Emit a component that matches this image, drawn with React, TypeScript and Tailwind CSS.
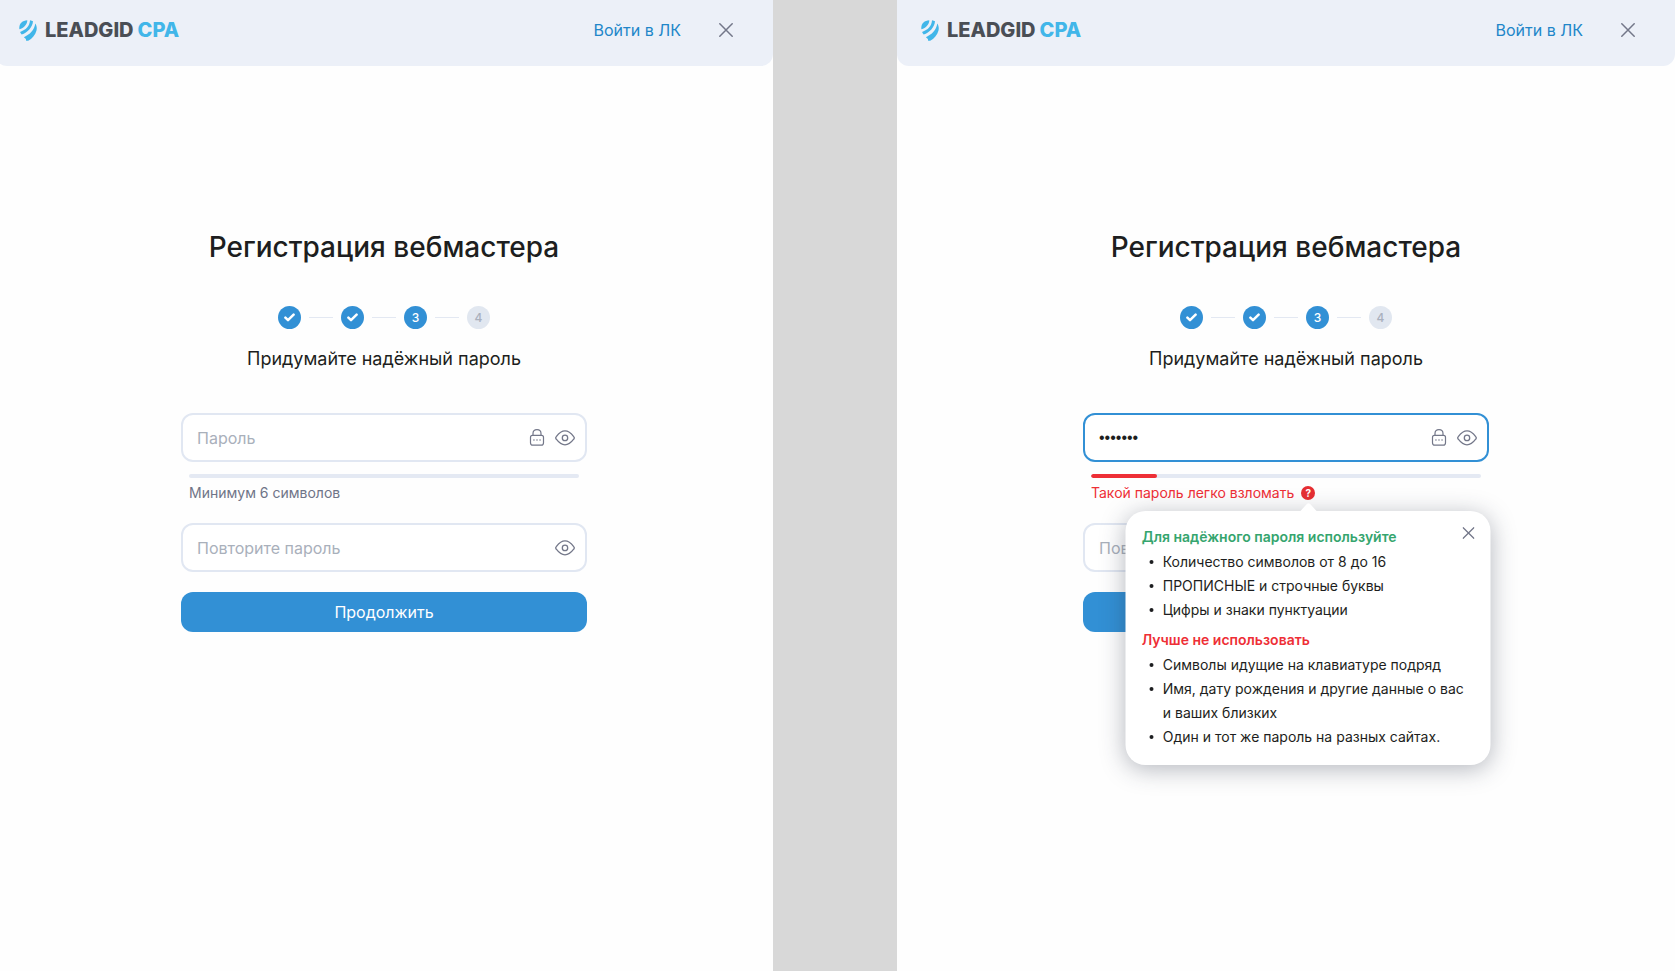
import { useState } from "react";
import clsx from "clsx";

const steps = [
  { number: 1, state: "done" },
  { number: 2, state: "done" },
  { number: 3, state: "current" },
  { number: 4, state: "next" },
];

const goodTips = [
  "Количество символов от 8 до 16",
  "ПРОПИСНЫЕ и строчные буквы",
  "Цифры и знаки пунктуации",
];

const badTips = [
  "Символы идущие на клавиатуре подряд",
  "Имя, дату рождения и другие данные о вас и ваших близких",
  "Один и тот же пароль на разных сайтах.",
];

function LogoMark() {
  return (
    <svg width="18" height="21" viewBox="0 0 18 21" fill="#41b6e9" aria-hidden="true">
      <path d="M0.4 9.2C-0.4 4.2 3 0.4 8.3 0.2C8.3 4.2 4.9 8 0.4 9.2Z" />
      <path d="M11 0.3C12.4 0.5 13.2 0.8 14 1.3C13.6 7 8.5 13 2.7 14.5C1.9 13.6 1.4 12.7 1.1 11.9C6.8 10.2 10.8 5.8 11 0.3Z" />
      <path d="M16.3 3.6C17.6 5.5 18.1 7.8 17.5 10.6C16.3 15 13.2 18.8 9.2 20.8H7.1L6.9 18.9L4.9 17.2C10.8 14.8 15.4 9.8 16.3 3.6Z" />
    </svg>
  );
}

function CloseIcon({ className }: { className?: string }) {
  return (
    <svg className={className} viewBox="0 0 14 14" fill="none" stroke="#737789" strokeWidth="1.5" strokeLinecap="round" aria-hidden="true">
      <path d="M0.8 0.8L13.2 13.2M13.2 0.8L0.8 13.2" />
    </svg>
  );
}

function EyeIcon() {
  return (
    <svg width="20" height="16" viewBox="0 0 20 16" fill="none" stroke="#737789" strokeWidth="1.3" aria-hidden="true">
      <path d="M1.3 9.2C0.6 8.4 0.6 7.4 1.3 6.6C3.3 4 6.2 0.9 10 0.9C13.8 0.9 16.7 4 18.7 6.6C19.4 7.4 19.4 8.4 18.7 9.2C16.7 11.8 13.8 14.9 10 14.9C6.2 14.9 3.3 11.8 1.3 9.2Z" />
      <circle cx="10" cy="7.9" r="2.7" />
    </svg>
  );
}

function LockIcon() {
  return (
    <svg width="16" height="17" viewBox="0 0 16 17" fill="none" stroke="#737789" strokeWidth="1.2" strokeLinecap="round" aria-hidden="true">
      <path d="M4 6.4V4.6C4 2.3 5.7 0.7 8 0.7C10.3 0.7 12 2.3 12 4.6V6.4" />
      <path d="M3.4 6.4H12.6C13.8 6.4 14.5 7.2 14.5 8.4V13.7C14.5 15.3 13.7 16.2 12.3 16.2H3.7C2.3 16.2 1.5 15.3 1.5 13.7V8.4C1.5 7.2 2.2 6.4 3.4 6.4Z" />
      <path d="M4.9 11H5M7.95 11H8.05M11 11H11.1" strokeWidth="1.4" />
    </svg>
  );
}

function Header() {
  return (
    <header className="flex h-[66px] items-center justify-between rounded-b-xl bg-[#ecf0f8] pr-10 pb-[6px] pl-6">
      <a href="#" className="flex items-center gap-2 text-xl leading-none font-extrabold">
        <LogoMark />
        <span className="flex gap-1">
          <span className="text-[#4a4e55]">LEADGID</span>
          <span className="text-[#41b6e9]">CPA</span>
        </span>
      </a>
      <div className="flex items-center gap-[38px]">
        <a href="#" className="text-base text-[#2186c9]">Войти в ЛК</a>
        <button type="button" aria-label="Закрыть">
          <CloseIcon className="size-[14px]" />
        </button>
      </div>
    </header>
  );
}

function Stepper() {
  return (
    <ol className="mt-[41px] flex items-center justify-center gap-2">
      {steps.map((step) => (
        <li key={step.number} className="flex items-center gap-2">
          {step.number > 1 && <span className="h-px w-6 bg-[#e3e8f2]" />}
          <span
            className={clsx(
              "flex size-[23px] items-center justify-center rounded-full text-xs font-medium",
              step.state === "next" ? "bg-[#e1e7f0] text-[#a9b0bd]" : "bg-[#3290d5] text-white"
            )}
          >
            {step.state === "done" ? (
              <svg width="11" height="9" viewBox="0 0 11 9" fill="none" stroke="white" strokeWidth="2.5" strokeLinecap="round" strokeLinejoin="round" aria-hidden="true">
                <path d="M1.4 4.7L4 7.2L9.6 1.7" />
              </svg>
            ) : (
              step.number
            )}
          </span>
        </li>
      ))}
    </ol>
  );
}

function PasswordField({ label, value, onChange, active, lock }: {
  label: string;
  value: string;
  onChange: (value: string) => void;
  active?: boolean;
  lock?: boolean;
}) {
  return (
    <div
      className={clsx(
        "flex h-[49px] items-center gap-[10px] rounded-xl border-2 bg-white pr-[10px] pl-[14px]",
        active ? "border-[#3290d5]" : "border-[#e1e7f2]"
      )}
    >
      <input
        type="password"
        aria-label={label}
        placeholder={label}
        value={value}
        onChange={(e) => onChange(e.target.value)}
        className={clsx(
          "min-w-0 flex-1 text-base text-[#1d1e20] outline-none placeholder:text-[#a9b0bb]",
          value && "font-['Liberation_Sans',sans-serif]"
        )}
      />
      {lock && (
        <button type="button" aria-label="Сгенерировать пароль">
          <LockIcon />
        </button>
      )}
      <button type="button" aria-label="Показать пароль">
        <EyeIcon />
      </button>
    </div>
  );
}

function TipList({ items }: { items: string[] }) {
  return (
    <ul>
      {items.map((item) => (
        <li key={item} className="flex gap-[9px] pl-2">
          <span className="flex h-6 items-center">
            <span className="size-1 rounded-full bg-[#1d1e20]" />
          </span>
          <span>{item}</span>
        </li>
      ))}
    </ul>
  );
}

function PasswordTips() {
  return (
    <div className="absolute top-[25px] left-1/2 z-10 w-[365px] -translate-x-1/2 rounded-[20px] bg-white px-4 pt-[14px] pb-4 text-sm leading-6 text-[#1d1e20] shadow-[0_4px_24px_rgba(40,50,70,0.35)]">
      <svg className="absolute -top-2 left-1/2 -translate-x-1/2" width="18" height="9" viewBox="0 0 18 9" fill="white" aria-hidden="true">
        <path d="M0 9L7.6 0.8Q9 -0.4 10.4 0.8L18 9Z" />
      </svg>
      <button type="button" aria-label="Закрыть подсказку" className="absolute top-4 right-4">
        <CloseIcon className="size-3" />
      </button>
      <h3 className="mb-px font-semibold text-[#35a56e]">Для надёжного пароля используйте</h3>
      <TipList items={goodTips} />
      <h3 className="mt-1.5 mb-px font-semibold text-[#ee2f36]">Лучше не использовать</h3>
      <TipList items={badTips} />
    </div>
  );
}

function Registration({ initialPassword = "" }: { initialPassword?: string }) {
  const [password, setPassword] = useState(initialPassword);
  const [repeat, setRepeat] = useState("");
  const weak = password.length > 0;

  return (
    <section className="min-h-screen min-w-0 flex-1 bg-[#fefefe]">
      <Header />
      <form className="mx-auto mt-[163px] w-full max-w-[406px]" onSubmit={(e) => e.preventDefault()}>
        <h1 className="text-center text-[28px] leading-9 font-medium whitespace-nowrap">Регистрация вебмастера</h1>
        <Stepper />
        <h2 className="mt-4 mb-10 text-center text-lg leading-7">Придумайте надёжный пароль</h2>

        <PasswordField label="Пароль" value={password} onChange={setPassword} active={weak} lock />
        <div className="mx-2 mt-3 h-1 overflow-hidden rounded-full bg-[#e4e9f3]">
          {weak && <div className="h-full w-[17%] rounded-full bg-[#ee2f36]" />}
        </div>
        <div className="mx-2 mt-[5px] mb-5 flex h-5 items-center gap-[7px] text-sm">
          {weak ? (
            <>
              <span className="text-[#ee2f36]">Такой пароль легко взломать</span>
              <span className="relative flex size-[14px]">
                <button type="button" aria-label="Подсказка" className="flex size-[14px] items-center justify-center rounded-full bg-[#e62e33] text-[10px] leading-none font-bold text-white">
                  ?
                </button>
                <PasswordTips />
              </span>
            </>
          ) : (
            <span className="text-[#6f7487]">Минимум 6 символов</span>
          )}
        </div>
        <PasswordField label="Повторите пароль" value={repeat} onChange={setRepeat} />
        <button type="submit" className="mt-5 h-10 w-full rounded-xl bg-[#3290d5] text-base text-white">
          Продолжить
        </button>
      </form>
    </section>
  );
}

export default function App() {
  return (
    <main className="overflow-hidden bg-[#d8d8d8] font-['Inter',sans-serif] text-[#1d1e20]">
      <div className="-ml-[5px] flex gap-[124px]">
        <Registration />
        <Registration initialPassword="1234567" />
      </div>
    </main>
  );
}
